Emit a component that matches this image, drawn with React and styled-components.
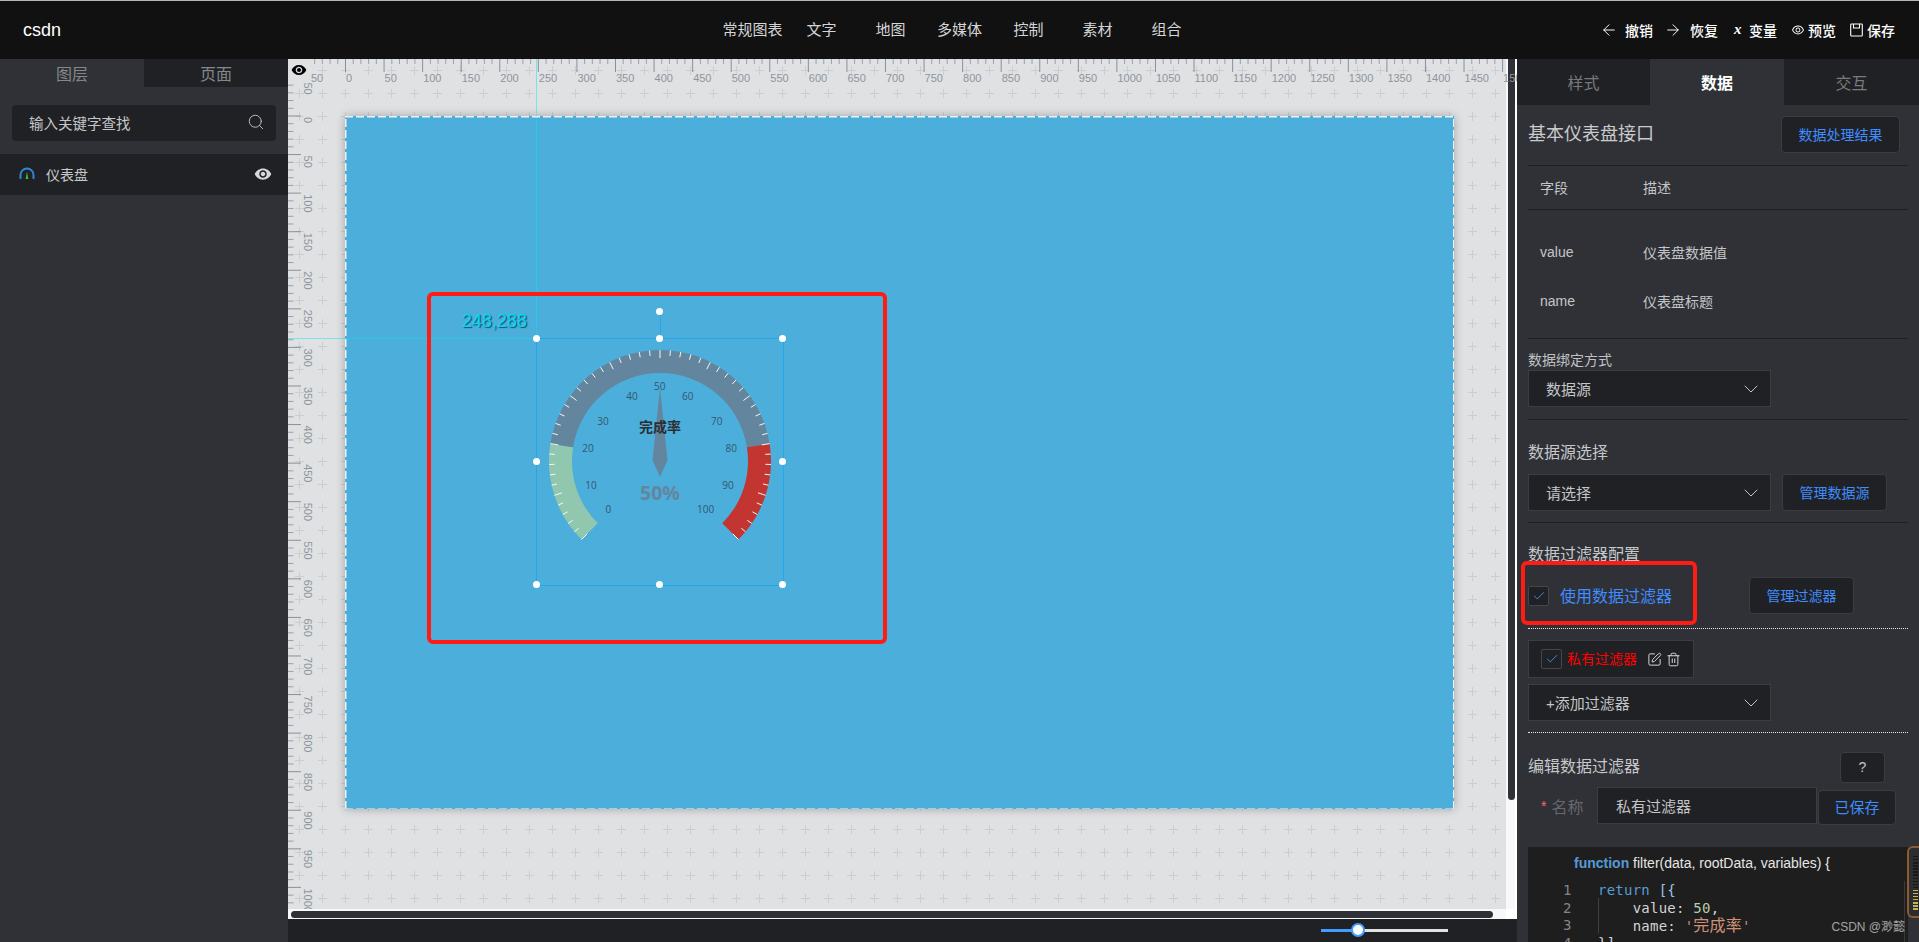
import styled, { createGlobalStyle } from "styled-components";
import {
  ArrowLeft,
  ArrowRight,
  Check,
  ChevronDown,
  Search,
  SquarePen,
  Trash2,
} from "lucide-react";
import { MdVisibility } from "react-icons/md";
import { AiOutlineEye } from "react-icons/ai";

const BLUE = "#3f8cff";
const plusTile =
  "data:image/svg+xml,%3Csvg xmlns='http://www.w3.org/2000/svg' width='23' height='23'%3E%3Cpath d='M11.5 7v9M7 11.5h9' stroke='%23cbcdcf' fill='none'/%3E%3C/svg%3E";

const GlobalStyle = createGlobalStyle`
  html, body {
    margin: 0;
    padding: 0;
    height: 100%;
    overflow: hidden;
    background: #2f3136;
  }
  * {
    box-sizing: border-box;
  }
  body {
    font-family: "Liberation Sans", "Noto Sans CJK SC", sans-serif;
  }
`;

const Page = styled.div`
  position: relative;
  width: 100%;
  height: 100vh;
  display: flex;
  flex-direction: column;
  overflow: hidden;
`;

const TopBar = styled.header`
  height: 59px;
  flex: none;
  display: grid;
  grid-template-columns: 1fr auto 1fr;
  align-items: center;
  padding-bottom: 3px;
  background: #111112;
  border-top: 1px solid #b5b5b5;
`;

const Logo = styled.div`
  padding: 3px 0 0 23px;
  font-size: 18px;
  color: #fff;
`;

const Nav = styled.nav`
  display: flex;
`;

const NavItem = styled.div`
  width: 69px;
  flex: none;
  text-align: center;
  font-size: 15px;
  white-space: nowrap;
  color: #d4d5d7;
  display: flex;
  justify-content: center;
`;

const Actions = styled.div`
  display: flex;
  justify-content: flex-end;
  align-items: center;
  padding: 2px 24px 0 0;
`;

const Action = styled.div`
  display: flex;
  align-items: center;
  gap: ${(p) => p.$gap || 9}px;
  margin-left: ${(p) => p.$left || 14}px;
  font-size: 14px;
  font-weight: 500;
  color: #fff;
  white-space: nowrap;
`;

const VarGlyph = styled.span`
  font-family: "Liberation Serif", serif;
  font-style: italic;
  font-weight: 700;
  font-size: 15px;
  width: 8px;
`;

const Main = styled.div`
  flex: 1;
  min-height: 0;
  display: flex;
`;

const LeftPanel = styled.aside`
  width: 288px;
  flex: none;
  background: #2f3136;
`;

const LeftTabs = styled.div`
  display: flex;
  height: 28px;
`;

const LeftTab = styled.div`
  flex: 1;
  display: flex;
  align-items: center;
  justify-content: center;
  font-size: 16px;
  color: #85878b;
  background: ${(p) => (p.$active ? "#2f3136" : "#202124")};
`;

const SearchBox = styled.div`
  height: 36px;
  margin: 18px 12px 13px;
  padding: 0 11px 2px 17px;
  display: flex;
  align-items: center;
  justify-content: space-between;
  font-size: 14.5px;
  color: #c6c7c9;
  background: #202124;
  border-radius: 4px;
`;

const LayerRow = styled.div`
  height: 41px;
  display: flex;
  align-items: center;
  padding: 0 16px 2px 19px;
  font-size: 14px;
  color: #c8c9cb;
  background: #202124;
`;

const LayerName = styled.span`
  flex: 1;
  margin-left: 11px;
`;

const Center = styled.main`
  width: 1229px;
  flex: none;
  display: flex;
  flex-direction: column;
`;

const Workspace = styled.div`
  position: relative;
  flex: 1;
  min-height: 0;
  display: flex;
`;

const Canvas = styled.div`
  flex: 1;
  min-width: 0;
  padding: 57px 0 0 57px;
  background-color: #e0e1e3;
  background-image: url("${plusTile}");
  background-size: 23px 23px;
`;

const Stage = styled.div`
  position: relative;
  width: 1109px;
  height: 693px;
  background: #4baedb;
  border: 1px solid transparent;
  box-shadow: 0 0 9px rgba(0, 0, 0, 0.28);

  &::after {
    content: "";
    position: absolute;
    inset: -1px;
    pointer-events: none;
    background:
      repeating-linear-gradient(90deg, #eef1f2 0 8px, transparent 8px 11px) top / 100% 1.5px no-repeat,
      repeating-linear-gradient(90deg, rgba(225, 235, 240, 0.55) 0 8px, transparent 8px 11px) bottom / 100% 1.5px no-repeat,
      repeating-linear-gradient(0deg, #eef1f2 0 8px, transparent 8px 11px) left / 1.5px 100% no-repeat,
      repeating-linear-gradient(0deg, #eef1f2 0 8px, transparent 8px 11px) right / 1.5px 100% no-repeat;
  }
`;

const Rulers = styled.svg`
  position: absolute;
  left: 0;
  top: 0;
  width: 1229px;
  height: 850px;
  pointer-events: none;
`;

const RulerEye = styled.div`
  position: absolute;
  left: 3px;
  top: 3px;
  display: flex;
  color: #000;
`;

const VTrack = styled.div`
  width: 11px;
  flex: none;
  padding-left: 2px;
  background: #f8f8f8;
  border-right: 2px solid #fff;
`;

const VThumb = styled.div`
  width: 7px;
  height: 741px;
  background: #2f3136;
  border-radius: 0 0 4px 4px;
`;

const HTrack = styled.div`
  height: 10px;
  flex: none;
  padding: 2px 0 0 3px;
  background: linear-gradient(90deg, #f8f8f8 1218px, #fff 1218px);
`;

const HThumb = styled.div`
  width: 1202px;
  height: 7px;
  background: #2f3136;
  border-radius: 4px;
`;

const BottomBar = styled.div`
  height: 23px;
  flex: none;
  display: flex;
  align-items: center;
  padding-left: 1033px;
  background: #202124;
`;

const SliderTrack = styled.div`
  position: relative;
  width: 127px;
  height: 3px;
  background: #e1e2e6;
`;

const SliderFill = styled.div`
  height: 100%;
  background: #409eff;
`;

const SliderKnob = styled.div`
  position: absolute;
  top: -6px;
  width: 14px;
  height: 14px;
  margin-left: -7px;
  background: #fff;
  border: 2px solid #409eff;
  border-radius: 50%;
`;

const Coord = styled.div`
  position: absolute;
  left: 116px;
  top: 192px;
  font-size: 18px;
  line-height: 24px;
  color: #00d8f5;
  text-shadow: 1px 1px 1px rgba(20, 40, 60, 0.75);
`;

const Selection = styled.div`
  position: absolute;
  left: 190px;
  top: 221px;
  width: 248px;
  height: 248px;
  border: 1px solid #22a8ee;
`;

const GuideV = styled.div`
  position: absolute;
  left: -1px;
  top: -280px;
  width: 1px;
  height: 279px;
  background: rgba(0, 230, 250, 0.45);
`;

const GuideH = styled.div`
  position: absolute;
  left: -249px;
  top: -1px;
  height: 1px;
  width: 248px;
  background: rgba(0, 230, 250, 0.45);
`;

const RotateLine = styled.div`
  position: absolute;
  left: 50%;
  top: -27px;
  width: 1px;
  height: 27px;
  background: #22a8ee;
`;

const Handle = styled.div`
  position: absolute;
  left: ${(p) => p.$x}%;
  top: ${(p) => p.$y}%;
  width: 7px;
  height: 7px;
  margin: -4px 0 0 -4px;
  background: #fff;
  border-radius: 50%;
`;

const RotateHandle = styled(Handle)`
  top: -27px;
`;

const GaugeSvg = styled.svg`
  position: absolute;
  left: 0;
  top: 0;
  width: 247px;
  height: 247px;
  overflow: visible;
`;

const Annotation = styled.div`
  position: absolute;
  left: ${(p) => p.$left}px;
  top: ${(p) => p.$top}px;
  width: ${(p) => p.$w}px;
  height: ${(p) => p.$h}px;
  border: 4px solid #ff1c14;
  border-radius: 6px;
  pointer-events: none;
`;

const RightPanel = styled.aside`
  position: relative;
  flex: 1;
  min-width: 0;
  overflow: hidden;
  background: #2f3136;
`;

const RightTabs = styled.div`
  display: flex;
  height: 46px;
  background: #202124;
`;

const RightTab = styled.div`
  width: ${(p) => p.$w}px;
  display: flex;
  align-items: center;
  justify-content: center;
  font-size: 16px;
  font-weight: ${(p) => (p.$active ? 700 : 400)};
  color: ${(p) => (p.$active ? "#fff" : "#77797d")};
  background: ${(p) => (p.$active ? "#2f3136" : "#202124")};
`;

const Body = styled.div`
  padding: 0 11px;
`;

const Section = styled.section`
  padding: ${(p) => p.$pad || "0"};
  border-bottom: ${(p) => (p.$dotted ? "1px dotted #e4e4e4" : "1px solid #1e1f22")};
`;

const HeaderRow = styled(Section)`
  height: 61px;
  display: flex;
  justify-content: space-between;
  padding: 11px 8px 0 0;
`;

const HeaderTitle = styled.div`
  font-size: 18px;
  line-height: 37px;
  color: #c9cacc;
`;

const DarkButton = styled.div`
  width: ${(p) => p.$w}px;
  height: ${(p) => p.$h || 37}px;
  margin: ${(p) => p.$margin || "0"};
  flex: none;
  display: flex;
  align-items: center;
  justify-content: center;
  padding-bottom: 2px;
  font-size: ${(p) => p.$size || 14}px;
  color: ${(p) => p.$color || BLUE};
  white-space: nowrap;
  background: #202124;
  border: 1px solid #3b3d42;
  border-radius: 4px;
`;

const TableRow = styled.div`
  display: flex;
  height: ${(p) => p.$h}px;
  align-items: center;
  padding: 0 0 2px 12px;
  font-size: 14px;
  color: #c4c5c8;
`;

const TableKey = styled.div`
  width: 103px;
  flex: none;
`;

const FieldLabel = styled.div`
  font-size: 14px;
  line-height: 20px;
  color: #c0c1c4;
`;

const SectionTitle = styled.div`
  font-size: 16px;
  line-height: 22px;
  color: #c6c7ca;
`;

const EditorTitle = styled(SectionTitle)`
  padding-bottom: 2px;
`;

const Row = styled.div`
  display: flex;
  align-items: ${(p) => p.$align || "flex-start"};
  margin-top: ${(p) => p.$top || 0}px;
`;

const SelectBox = styled.div`
  width: 243px;
  height: 37px;
  flex: none;
  display: flex;
  align-items: center;
  justify-content: space-between;
  margin-top: ${(p) => p.$top || 0}px;
  padding: 0 7px 0 17px;
  font-size: 15px;
  color: #c4c5c8;
  background: #202124;
  border: 1px solid #3b3d42;
`;

const CheckBox = styled.div`
  width: 21px;
  height: 20px;
  flex: none;
  display: flex;
  align-items: center;
  justify-content: center;
  color: #4f94ea;
  background: #202124;
  border: 1px solid #44464c;
  border-radius: 2px;
`;

const FilterLabel = styled.div`
  margin: 0 77px 0 11px;
  padding-bottom: 2px;
  font-size: 16px;
  white-space: nowrap;
  color: ${BLUE};
`;

const Chip = styled.div`
  width: 166px;
  height: 38px;
  display: flex;
  align-items: center;
  padding-left: 12px;
  background: #202124;
  border: 1px solid #3b3d42;
`;

const ChipName = styled.span`
  margin: 0 10px 2px 5px;
  font-size: 14px;
  white-space: nowrap;
  color: #ff0000;
`;

const ChipIcons = styled.div`
  display: flex;
  gap: 4px;
  color: #d4d5d7;
`;

const NameLabel = styled.div`
  width: 69px;
  height: 37px;
  flex: none;
  display: flex;
  align-items: center;
  padding-left: 13px;
  font-size: 16px;
  color: #66686d;
`;

const Star = styled.span`
  color: #f56c6c;
  margin-right: 5px;
  font-size: 14px;
`;

const NameInput = styled.div`
  width: 220px;
  height: 37px;
  flex: none;
  display: flex;
  align-items: center;
  padding-left: 18px;
  font-size: 15px;
  color: #c4c5c8;
  background: #202124;
  border: 1px solid #3b3d42;
`;

const CodeBlock = styled.div`
  margin-top: 22px;
  height: 110px;
  background: #1e1e1e;
  padding-top: 6px;
`;

const CodeHead = styled.div`
  padding-left: 46px;
  height: 29px;
  font-size: 14px;
  line-height: 20px;
  color: #e6e6e6;
`;

const Keyword = styled.b`
  color: #559ad6;
`;

const CodeLine = styled.div`
  display: flex;
  height: 17.5px;
  font-family: "DejaVu Sans Mono", "Noto Sans CJK SC", monospace;
  font-size: 14px;
  line-height: 17.5px;
  letter-spacing: 0.24px;
  color: #d4d4d4;
  white-space: pre;
`;

const LineNo = styled.span`
  width: 70px;
  padding-left: 35px;
  flex: none;
  color: #858585;
`;

const CodeText = styled.span`
  color: ${(p) => p.$color || "inherit"};
  font-size: ${(p) => p.$size || 14}px;
`;

const MiniMapLine = styled.div`
  position: absolute;
  left: 387px;
  top: 822px;
  width: 1px;
  height: 61px;
  background: #3a3a3a;
`;

const IndentGuide = styled.div`
  position: absolute;
  left: 81px;
  top: 839px;
  width: 1px;
  height: 35px;
  background: #3f3f3f;
`;

const Watermark = styled.div`
  position: absolute;
  right: 14px;
  bottom: 7px;
  font-size: 12px;
  line-height: 16px;
  color: #a4a4a4;
`;

const SideGadget = styled.div`
  position: absolute;
  right: 0;
  top: 787px;
  width: 12px;
  height: 72px;
  display: flex;
  flex-direction: column;
  gap: 1.7px;
  padding: 8px 1px 0 4px;
  background: #2b2d31;
  border: 2px solid #8a5c30;
  border-right: none;
  border-radius: 6px 0 0 6px;
`;

const GadgetTick = styled.div`
  height: 1.4px;
  flex: none;
  background: ${(p) => (p.$on ? "#c9b04a" : "#17181a")};
`;

const polar = (r, deg) => {
  const a = (deg * Math.PI) / 180;
  return [124 + r * Math.cos(a), 123 - r * Math.sin(a)];
};

const arcPath = (t0, t1) => {
  const a0 = 225 - 270 * t0;
  const a1 = 225 - 270 * t1;
  const [x0, y0] = polar(111, a0);
  const [x1, y1] = polar(111, a1);
  const [x2, y2] = polar(88, a1);
  const [x3, y3] = polar(88, a0);
  const large = t1 - t0 > 2 / 3 ? 1 : 0;
  return `M${x0} ${y0}A111 111 0 ${large} 1 ${x1} ${y1}L${x2} ${y2}A88 88 0 ${large} 0 ${x3} ${y3}Z`;
};

const gaugeLabels = [
  ["0", 265, 568],
  ["10", 213, 496],
  ["20", 204, 384],
  ["30", 249, 303],
  ["40", 336, 228],
  ["50", 419, 200],
  ["60", 503, 228],
  ["70", 590, 303],
  ["80", 634, 384],
  ["90", 624, 496],
  ["100", 557, 568],
];

const Gauge = () => (
  <GaugeSvg viewBox="1 1 247 247">
    <path d={arcPath(0, 0.2)} fill="#91c7ae" />
    <path d={arcPath(0.2, 0.8)} fill="#63869e" />
    <path d={arcPath(0.8, 1)} fill="#c23531" />
    {Array.from({ length: 51 }, (_, i) => {
      const deg = 225 - 5.4 * i;
      const [x0, y0] = polar(111, deg);
      const [x1, y1] = polar(i % 5 === 0 ? 103 : 105.5, deg);
      return <line key={i} x1={x0} y1={y0} x2={x1} y2={y1} stroke="#f4f6f7" strokeWidth="1" />;
    })}
    {gaugeLabels.map(([t, x, y]) => (
      <text
        key={t}
        x={x / 3 + 520 - 536}
        y={y / 3 + 320 - 338 + 3.5}
        textAnchor="middle"
        fontSize="10"
        fontFamily="Open Sans, sans-serif"
        fill="#35566e"
      >
        {t}
      </text>
    ))}
    <polygon points="124,50 131.5,122 124,139 116.500,122" fill="#63869e" />
    <text
      x="124"
      y="94"
      textAnchor="middle"
      fontSize="14"
      fontWeight="700"
      fontFamily="Noto Sans CJK SC, sans-serif"
      fill="#2b2f33"
    >
      完成率
    </text>
    <text
      x="124"
      y="162"
      textAnchor="middle"
      fontSize="19.5"
      fontWeight="700"
      fontFamily="Open Sans, sans-serif"
      fill="#63869e"
    >
      50%
    </text>
  </GaugeSvg>
);

const TICK = 7.714;
const X0 = 345.5;
const Y0 = 116;

const RulerTicks = () => {
  const top = [];
  const left = [];
  for (let i = -5; i <= 150; i++) {
    const x = X0 + i * TICK;
    const major = i % 5 === 0;
    if (x >= 311 && x <= 1505) {
      top.push(
        <line key={`t${i}`} x1={x} x2={x} y1="59" y2={major ? 72 : 64} stroke={major ? "#87919d" : "#99a1ab"} />
      );
    }
    if (major) {
      top.push(
        <text
          key={`tl${i}`}
          x={i < 0 ? x + 4 : x + 0.5}
          y="82"
          fontSize="11"
          fill="#8d959d"
          fontFamily="Liberation Sans, sans-serif"
        >
          {Math.abs(i * 10)}
        </text>
      );
    }
  }
  for (let i = -5; i <= 103; i++) {
    const y = Y0 + i * TICK;
    const major = i % 5 === 0;
    if (y >= 83) {
      left.push(
        <line key={`l${i}`} y1={y} y2={y} x1="288" x2={major ? 301 : 293.500} stroke={major ? "#87919d" : "#99a1ab"} />
      );
    }
    if (major) {
      left.push(
        <text
          key={`ll${i}`}
          transform={`translate(304 ${i < 0 ? y + 5 : y + 1}) rotate(90)`}
          fontSize="11"
          fill="#8d959d"
          fontFamily="Liberation Sans, sans-serif"
        >
          {Math.abs(i * 10)}
        </text>
      );
    }
  }
  return (
    <Rulers viewBox="288 59 1229 850">
      {top}
      {left}
    </Rulers>
  );
};

const SaveIcon = () => (
  <svg width="13" height="14" viewBox="0 0 13 14" fill="none" stroke="#fff" strokeWidth="1.1">
    <path d="M1.500 1h10a.8.8 0 0 1 .8.8v10.400a.8.8 0 0 1-.8.8h-10a.8.8 0 0 1-.8-.8V1.800a.8.8 0 0 1 .8-.8z" />
    <path d="M3.500 1v4h6V1" />
  </svg>
);

const LayerIcon = () => (
  <svg width="16" height="13" viewBox="0 0 16 13" fill="none">
    <path d="M1.500 12V8a6.500 6.500 0 0 1 13 0v4" stroke="#2f86d8" strokeWidth="2" />
    <path d="M8 4.500l1.300 7.500H6.700z" fill="#35c24a" />
  </svg>
);

const FilledEye = ({ size, color }) => <MdVisibility size={size} color={color} />;

const Chevron = () => <ChevronDown size={24} strokeWidth={1} />;

const handles = [
  [0, 0],
  [50, 0],
  [100, 0],
  [0, 50],
  [100, 50],
  [0, 100],
  [50, 100],
  [100, 100],
];

const navItems = ["常规图表", "文字", "地图", "多媒体", "控制", "素材", "组合"];

export default function App() {
  return (
    <Page>
      <GlobalStyle />
      <TopBar>
        <Logo>csdn</Logo>
        <Nav>
          {navItems.map((n) => (
            <NavItem key={n}>{n}</NavItem>
          ))}
        </Nav>
        <Actions>
          <Action $gap={7}>
            <ArrowLeft size={18} strokeWidth={1.3} />
            撤销
          </Action>
          <Action $gap={8} $left={11}>
            <ArrowRight size={18} strokeWidth={1.3} />
            恢复
          </Action>
          <Action $gap={7} $left={16}>
            <VarGlyph>x</VarGlyph>
            变量
          </Action>
          <Action $gap={3} $left={14}>
            <AiOutlineEye size={14} />
            预览
          </Action>
          <Action $gap={4} $left={14}>
            <SaveIcon />
            保存
          </Action>
        </Actions>
      </TopBar>

      <Main>
        <LeftPanel>
          <LeftTabs>
            <LeftTab $active>图层</LeftTab>
            <LeftTab>页面</LeftTab>
          </LeftTabs>
          <SearchBox>
            输入关键字查找
            <Search size={18} strokeWidth={1.2} color="#c6c7c9" />
          </SearchBox>
          <LayerRow>
            <LayerIcon />
            <LayerName>仪表盘</LayerName>
            <FilledEye size={18} color="#d8d9db" />
          </LayerRow>
        </LeftPanel>

        <Center>
          <Workspace>
            <Canvas>
              <Stage>
                <Coord>248,288</Coord>
                <Selection>
                  <GuideV />
                  <GuideH />
                  <RotateLine />
                  <Gauge />
                  {handles.map(([x, y]) => (
                    <Handle key={`${x}-${y}`} $x={x} $y={y} />
                  ))}
                  <RotateHandle $x={50} $y={0} />
                </Selection>
                <Annotation $left={81} $top={175} $w={460} $h={352} />
              </Stage>
            </Canvas>
            <VTrack>
              <VThumb />
            </VTrack>
            <RulerTicks />
            <RulerEye>
              <FilledEye size={16} />
            </RulerEye>
          </Workspace>
          <HTrack>
            <HThumb />
          </HTrack>
          <BottomBar>
            <SliderTrack>
              <SliderFill style={{ width: 37 }} />
              <SliderKnob style={{ left: 37 }} />
            </SliderTrack>
          </BottomBar>
        </Center>

        <RightPanel>
          <RightTabs>
            <RightTab $w={133}>样式</RightTab>
            <RightTab $w={134} $active>
              数据
            </RightTab>
            <RightTab $w={135}>交互</RightTab>
          </RightTabs>
          <Body>
            <HeaderRow>
              <HeaderTitle>基本仪表盘接口</HeaderTitle>
              <DarkButton $w={119}>数据处理结果</DarkButton>
            </HeaderRow>
            <Section>
              <TableRow $h={43}>
                <TableKey>字段</TableKey>
                描述
              </TableRow>
            </Section>
            <Section $pad="18px 0 12px">
              <TableRow $h={49}>
                <TableKey>value</TableKey>
                仪表盘数据值
              </TableRow>
              <TableRow $h={49}>
                <TableKey>name</TableKey>
                仪表盘标题
              </TableRow>
            </Section>
            <Section $pad="11px 0 12px">
              <FieldLabel>数据绑定方式</FieldLabel>
              <SelectBox>
                数据源
                <Chevron />
              </SelectBox>
            </Section>
            <Section $pad="22px 0 11px">
              <SectionTitle>数据源选择</SectionTitle>
              <Row $top={10}>
                <SelectBox>
                  请选择
                  <Chevron />
                </SelectBox>
                <DarkButton $w={105} $margin="0 0 0 11px">
                  管理数据源
                </DarkButton>
              </Row>
            </Section>
            <Section $pad="21px 0 14px" $dotted>
              <SectionTitle>数据过滤器配置</SectionTitle>
              <Row $top={11} $align="center">
                <CheckBox>
                  <Check size={14} strokeWidth={1.5} />
                </CheckBox>
                <FilterLabel>使用数据过滤器</FilterLabel>
                <DarkButton $w={105}>管理过滤器</DarkButton>
              </Row>
            </Section>
            <Section $pad="11px 0 11px" $dotted>
              <Chip>
                <CheckBox>
                  <Check size={14} strokeWidth={1.5} />
                </CheckBox>
                <ChipName>私有过滤器</ChipName>
                <ChipIcons>
                  <SquarePen size={15} strokeWidth={1.6} />
                  <Trash2 size={15} strokeWidth={1.6} />
                </ChipIcons>
              </Chip>
              <SelectBox $top={6}>
                +添加过滤器
                <Chevron />
              </SelectBox>
            </Section>
            <Row $top={19} $align="center">
              <EditorTitle>编辑数据过滤器</EditorTitle>
              <DarkButton $w={45} $h={31} $margin="0 23px 0 auto" $color="#c4c5c8">
                ?
              </DarkButton>
            </Row>
            <Row $top={4}>
              <NameLabel>
                <Star>*</Star>
                名称
              </NameLabel>
              <NameInput>私有过滤器</NameInput>
              <DarkButton $w={78} $h={35} $size={15} $margin="3px 0 0 1px">
                已保存
              </DarkButton>
            </Row>
            <CodeBlock>
              <CodeHead>
                <Keyword>function</Keyword> filter(data, rootData, variables) {"{"}
              </CodeHead>
              <CodeLine>
                <LineNo>1</LineNo>
                <span>
                  <CodeText $color="#569cd6">return</CodeText> <CodeText $color="#9cc4e4">[{"{"}</CodeText>
                </span>
              </CodeLine>
              <CodeLine>
                <LineNo>2</LineNo>
                <span>
                  {"    value: "}
                  <CodeText $color="#b5cea8">50</CodeText>,
                </span>
              </CodeLine>
              <CodeLine>
                <LineNo>3</LineNo>
                <span>
                  {"    name: "}
                  <CodeText $color="#ce9178">'</CodeText>
                  <CodeText $color="#ce9178" $size={16}>
                    完成率
                  </CodeText>
                  <CodeText $color="#ce9178">'</CodeText>
                </span>
              </CodeLine>
              <CodeLine>
                <LineNo>4</LineNo>
                {"}]"}
              </CodeLine>
            </CodeBlock>
          </Body>
          <Annotation $left={4} $top={502} $w={176} $h={64} />
          <IndentGuide />
          <MiniMapLine />
          <Watermark>CSDN @渺懿</Watermark>
          <SideGadget>
            {Array.from({ length: 18 }, (_, i) => (
              <GadgetTick key={i} $on={i > 10} />
            ))}
          </SideGadget>
        </RightPanel>
      </Main>
    </Page>
  );
}
